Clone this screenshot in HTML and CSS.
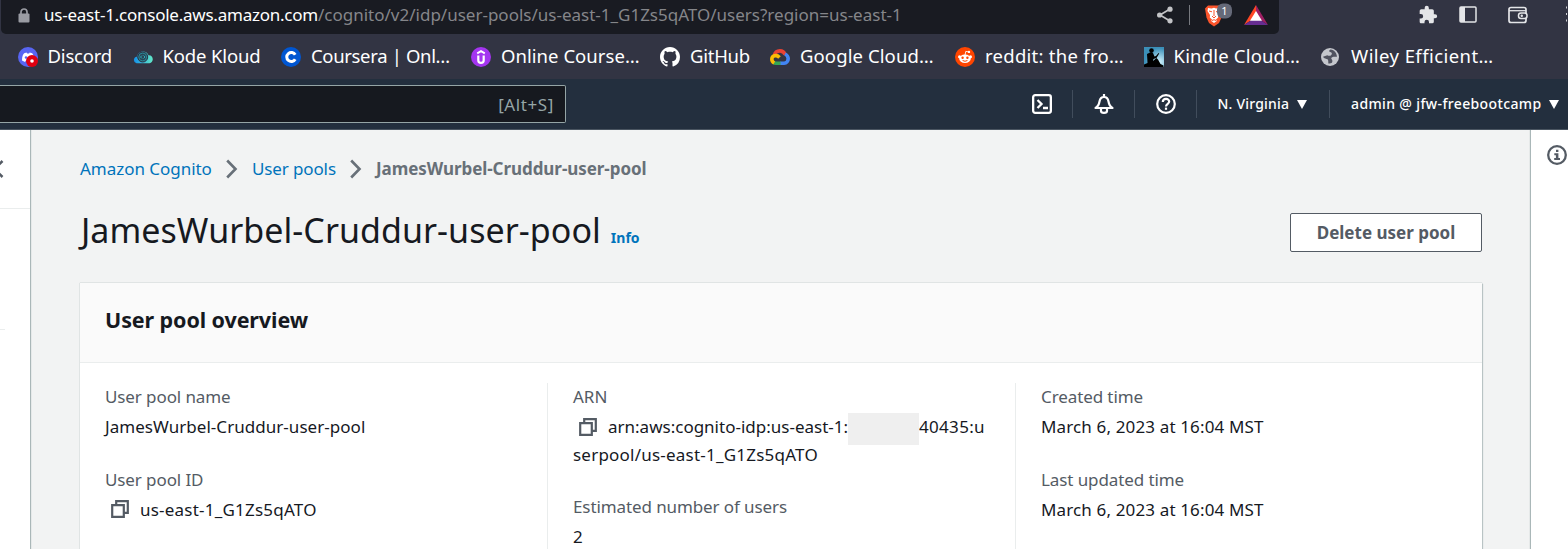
FILE: index.html
```html
<!DOCTYPE html>
<html lang="en">
<head>
<meta charset="utf-8">
<title>JamesWurbel-Cruddur-user-pool</title>
<link rel="stylesheet" href="styles.css">
</head>
<body>
<div class="toolbar">
  <div class="address">
    <svg class="lock" width="12" height="15" viewBox="0 0 12 15"><path d="M3 6V4a3 3 0 0 1 6 0v2" fill="none" stroke="#9a9ca3" stroke-width="1.7"/><rect x=".5" y="5.5" width="11" height="9" rx="1" fill="#9a9ca3"/></svg>
    <span class="host">us-east-1.console.aws.amazon.com</span><span class="path">/cognito/v2/idp/user-pools/us-east-1_G1Zs5qATO/users?region=us-east-1</span>
    <svg class="share" width="18" height="18" viewBox="0 0 18 18"><path d="M14 3 4 9l10 6" fill="none" stroke="#c3c4c7" stroke-width="1.7"/><circle cx="14" cy="3.2" r="2.6" fill="#c3c4c7"/><circle cx="3.6" cy="9" r="2.6" fill="#c3c4c7"/><circle cx="14" cy="14.8" r="2.6" fill="#c3c4c7"/></svg>
    <i class="bar"></i>
    <svg class="brave" width="30" height="26" viewBox="0 0 30 26"><path d="M5 3.500h12l3 3-1.500 9-2.500 5.500-5 3.500L6 21l-2.500-5.500L2 6.500z" fill="#fb542b"/><path d="m5 6 3.500.5 2.500-.8 2 .8L16 6l1.500 3-2.500 4 .2 2.500-2.200 2 .8 1.500-2.800 2-2.800-2 .8-1.500-2.200-2 .2-2.500-2.500-4z" fill="#fff"/><path d="m6 9 3 .8M16 9l-3 .8M11 8v6m-2 0 2 2 2-2m-4 4.500 2-.8 2 .8" stroke="#fb542b" fill="none"/><rect x="14" y="1.500" width="15" height="15" rx="6" fill="#656978"/><text x="21.500" y="13" class="badge">1</text></svg>
    <svg class="bat" width="24" height="20" viewBox="0 0 24 20"><path d="M12 0 0 20l12-8z" fill="#ff4724"/><path d="m12 0 12 20-12-8z" fill="#9e1f63"/><path d="M0 20h24l-12-8z" fill="#662d91"/><path d="m12 6 6 9.800H6z" fill="#fff"/></svg>
  </div>
  <svg class="puzzle" width="20" height="20" viewBox="0 0 24 24"><path fill="#e4e5e8" d="M20.500 11H19V7a2 2 0 0 0-2-2h-4V3.500a2.500 2.500 0 0 0-5 0V5H4a2 2 0 0 0-2 2v3.800h1.500a2.700 2.700 0 0 1 0 5.400H2V20c0 1.100.9 2 2 2h3.800v-1.500a2.700 2.700 0 0 1 5.400 0V22H17a2 2 0 0 0 2-2v-4h1.500a2.500 2.500 0 0 0 0-5z"/></svg>
  <svg class="panel" width="18" height="17" viewBox="0 0 18 17"><rect x="1" y="1" width="16" height="15" rx="1" fill="none" stroke="#e4e5e8" stroke-width="1.500"/><path d="M1 1h5v15H1z" fill="#e4e5e8"/></svg>
  <svg class="wallet" width="20" height="18" viewBox="0 0 20 18"><rect x="1" y="1.500" width="17" height="15" rx="2" fill="none" stroke="#e4e5e8" stroke-width="1.700"/><path d="M1 4.700h17" stroke="#e4e5e8" stroke-width="1.300"/><rect x="10.500" y="7" width="8.500" height="5.500" rx="2.500" fill="#323443" stroke="#e4e5e8" stroke-width="1.500"/><circle cx="13.800" cy="9.700" r="1.200" fill="#e4e5e8"/></svg>
  <svg class="kebab" width="2" height="18" viewBox="0 0 2 18"><path d="M1 1.500h1v2H1zM1 8h1v2H1zM1 14.500h1v2H1z" fill="#d0d1d5"/></svg>
</div>

<div class="bookmarks">
  <a class="bm b1"><svg width="20" height="20" viewBox="0 0 20 20"><circle cx="10" cy="10" r="10" fill="#5865f2"/><path d="M4 13.500C4 9.500 5 7 6.200 6.200L8.500 5.500l.6 1h2l.6-1 2.500.7C15.500 7.500 16 10 16 13.500l-3 1.500-1-1.500H8L7 15z" fill="#fff"/><circle cx="8" cy="10.500" r="1.200" fill="#5865f2"/><circle cx="14" cy="14" r="6" fill="#e00010"/><circle cx="14" cy="14" r="1.800" fill="#fff"/></svg><span>Discord</span></a>
  <a class="bm b2"><svg width="20" height="20" viewBox="0 0 20 20"><defs><linearGradient id="kk"><stop stop-color="#1490e8"/><stop offset="1" stop-color="#62e8c8"/></linearGradient></defs><path d="M3.500 16.200a3.300 3.300 0 0 1 .3-6.500C5.500 3 14 3 15.500 8.300c5.500-.3 5.500 7.500 1 7.900z" fill="url(#kk)"/><circle cx="9.700" cy="10" r="5" fill="#2a4656" stroke="#2b3545"/><circle cx="9.700" cy="10" r="3.900" fill="none" stroke="#2899a8" stroke-width=".8"/><path d="M9 8.500 7.500 10 9 11.500M10.500 8.500 12 10l-1.500 1.500" stroke="#30b8c8" stroke-width=".9" fill="none"/></svg><span>Kode Kloud</span></a>
  <a class="bm b3"><svg width="20" height="20" viewBox="0 0 20 20"><circle cx="10" cy="10" r="10" fill="#0056d2"/><path d="M14.200 12.200a4.500 4.500 0 1 1 0-4.400" fill="none" stroke="#fff" stroke-width="3"/></svg><span>Coursera | Onl…</span></a>
  <a class="bm b4"><svg width="20" height="20" viewBox="0 0 20 20"><circle cx="10" cy="10" r="10" fill="#a435f0"/><path d="M7.300 8.500v4.700a2.700 2.700 0 0 0 5.400 0V8.500" fill="none" stroke="#fff" stroke-width="2.200"/><path d="M6.200 6.300 10 4.200l3.800 2.100" fill="none" stroke="#fff" stroke-width="1.900"/></svg><span>Online Course…</span></a>
  <a class="bm b5"><svg width="20" height="20" viewBox="0 0 16 16"><path fill="#fff" d="M8 0C3.580 0 0 3.580 0 8c0 3.540 2.290 6.530 5.470 7.590.4.070.55-.17.55-.38 0-.19-.01-.82-.01-1.490-2.010.37-2.530-.49-2.690-.94-.09-.23-.48-.94-.82-1.130-.28-.15-.68-.52-.01-.53.63-.01 1.080.58 1.230.82.72 1.210 1.870.87 2.330.66.07-.52.28-.87.51-1.070-1.780-.2-3.640-.89-3.640-3.950 0-.87.31-1.590.82-2.150-.08-.2-.36-1.020.08-2.120 0 0 .67-.21 2.200.82.640-.18 1.320-.27 2-.27s1.360.09 2 .27c1.530-1.040 2.200-.82 2.200-.82.44 1.100.16 1.920.08 2.120.51.56.82 1.270.82 2.150 0 3.070-1.870 3.750-3.650 3.950.29.25.54.73.54 1.480 0 1.070-.01 1.930-.01 2.200 0 .21.15.46.55.38A8.010 8.010 0 0 0 16 8c0-4.420-3.580-8-8-8z"/></svg><span>GitHub</span></a>
  <a class="bm b6"><svg width="20" height="20" viewBox="0 0 20 20" fill="none" stroke-width="3.600"><path d="M4.300 8.500C5 5.200 7.200 3.900 10 3.900c2.500 0 4.200 1.300 5.200 3.700" stroke="#ea4335"/><path d="M15 7c2 1 3.200 2.500 3.200 4.800s-1.800 4.400-4 4.400H10" stroke="#4285f4"/><path d="M10.500 16.200H6c-1 0-1.800-.2-2.500-.7" stroke="#34a853"/><path d="M4.200 16C1 14 1 9.800 4.500 8.800c2.300-.6 3.700.3 5 1.700" stroke="#fbbc04"/></svg><span>Google Cloud…</span></a>
  <a class="bm b7"><svg width="20" height="20" viewBox="0 0 20 20"><circle cx="10" cy="10" r="10" fill="#ff4500"/><ellipse cx="10" cy="11.700" rx="5.800" ry="4.200" fill="#fff"/><circle cx="4.500" cy="9.700" r="1.500" fill="#fff"/><circle cx="15.500" cy="9.700" r="1.500" fill="#fff"/><circle cx="14" cy="4.900" r="1.200" fill="#fff"/><path d="m10 8 .8-3.600 3 .6" fill="none" stroke="#fff" stroke-width=".9"/><circle cx="7.600" cy="10.800" r="1.200" fill="#ff4500"/><circle cx="12.400" cy="10.800" r="1.200" fill="#ff4500"/><path d="M7.600 13.500q2.400 1.500 4.800 0" fill="none" stroke="#ff4500"/></svg><span>reddit: the fro…</span></a>
  <a class="bm b8"><svg width="20" height="20" viewBox="0 0 20 20"><defs><radialGradient id="kd" cx=".75" cy=".75" r=".7"><stop stop-color="#d5f5ff"/><stop offset="1" stop-color="#3b8fb8"/></radialGradient></defs><path d="M0 0h20v20H0z" fill="url(#kd)"/><circle cx="7.500" cy="3.600" r="2.300"/><path d="m3 7 3.500-1.700 2.500.7 1.500 3.500 1.500-.5 2.500-3 .7.500-2.700 4.500-3 1-.5 2 3.500-3 1.500 1.500 2.500 4.500 3 1.500v1.500H0v-2.500l3.500-1.500z"/></svg><span>Kindle Cloud…</span></a>
  <a class="bm b9"><svg width="20" height="20" viewBox="0 0 20 20"><circle cx="9" cy="10" r="9" fill="#c4c6cc"/><path d="M9.500 2.500c-2 1-1.500 2.500.3 2.700 1.500.3 1.300 2 .2 3-.8 1-2.700.5-3.700 0L2 9.800c1 2 3.500 2 4.500 2.400 1 .8.800 2.300.8 4.300 4 0 4.200-1.300 4-3-.5-1.500-1.300-1.700-1-2.500.8-1.500 3.200-1.300 5.700-1.200C15.800 6 13.500 3 9.500 2.500z" fill="#50525f"/></svg><span>Wiley Efficient…</span></a>
</div>

<div class="nav">
  <div class="search"><span>[Alt+S]</span></div>
  <div class="cell ic"><svg width="20" height="20" viewBox="0 0 20 20" fill="none" stroke="#fff" stroke-width="2.300"><rect x="1.150" y="1.150" width="17.700" height="17.700" rx="2"/><path d="m5.500 6 4 4-4 4M11 14h5"/></svg></div>
  <div class="cell ic"><svg width="20" height="20" viewBox="0 0 20 20" fill="none" stroke="#fff" stroke-width="2.200" stroke-linejoin="round"><path d="M10 0v3M1.500 14c2.800-1.500 3.500-3.500 4-6.500C6 4.500 7.500 3 10 3s4 1.500 4.500 4.500c.5 3 1.200 5 4 6.500zM7 14.500V17c0 2.500 6 2.500 6 0v-2.500"/></svg></div>
  <div class="cell ic"><svg width="20" height="20" viewBox="0 0 20 20" fill="none" stroke="#fff" stroke-width="2.200"><circle cx="10" cy="10" r="8.800"/><path d="M6.800 8C6.800 4 13.200 4 13.200 7.500c0 2.300-3.200 2.300-3.200 5"/><path d="M10 13.600v2.200"/></svg></div>
  <div class="cell region"><span>N. Virginia</span><i class="caret"></i></div>
  <div class="cell account"><span>admin @ jfw-freebootcamp</span><i class="caret"></i></div>
</div>

<div class="page">
  <aside class="left"><div class="lefttop"><svg width="4" height="18" viewBox="0 0 4 18"><path d="M3 1-5 9l8 8" transform="translate(-.5)" fill="none" stroke="#545b64" stroke-width="2.500"/></svg></div><div class="leftsep"></div></aside>
  <main class="main">
    <nav class="crumbs">
      <a>Amazon Cognito</a>
      <svg width="12" height="20" viewBox="0 0 12 20"><path d="m1.200 1.500 8.300 8.500-8.300 8.500" fill="none" stroke="#687078" stroke-width="2.600"/></svg>
      <a>User pools</a>
      <svg width="12" height="20" viewBox="0 0 12 20"><path d="m1.200 1.500 8.300 8.500-8.300 8.500" fill="none" stroke="#687078" stroke-width="2.600"/></svg>
      <b>JamesWurbel-Cruddur-user-pool</b>
    </nav>
    <header class="head">
      <h1>JamesWurbel-Cruddur-user-pool</h1><a class="info">Info</a>
      <button class="delete">Delete user pool</button>
    </header>
    <section class="card">
      <h2>User pool overview</h2>
      <div class="cols">
        <div class="col">
          <div class="field"><div class="label">User pool name</div><div class="name">JamesWurbel-Cruddur-user-pool</div></div>
          <div class="field"><div class="label">User pool ID</div><div class="copyrow"><svg class="copy" width="18" height="18" viewBox="0 0 18 18" fill="none" stroke="#545b64" stroke-width="2.200"><path d="M5.200 5V1.200h11.600v11.600H13"/><path d="M1.200 5.200h11.600v11.600H1.200z"/></svg><span class="poolid">us-east-1_G1Zs5qATO</span></div></div>
        </div>
        <div class="col">
          <div class="field"><div class="label arnlabel">ARN</div><div class="copyrow"><svg class="copy" width="18" height="18" viewBox="0 0 18 18" fill="none" stroke="#545b64" stroke-width="2.200"><path d="M5.200 5V1.200h11.600v11.600H13"/><path d="M1.200 5.200h11.600v11.600H1.200z"/></svg><span>arn:aws:cognito-idp:us-east-1:</span><i class="mask"></i><span class="digits">40435:u</span></div><div class="arnrest">serpool/us-east-1_G1Zs5qATO</div></div>
          <div class="field"><div class="label">Estimated number of users</div><div>2</div></div>
        </div>
        <div class="col">
          <div class="field"><div class="label">Created time</div><div class="date">March 6, 2023 at 16:04 MST</div></div>
          <div class="field"><div class="label">Last updated time</div><div class="date">March 6, 2023 at 16:04 MST</div></div>
        </div>
      </div>
    </section>
  </main>
  <aside class="right"><svg width="20" height="20" viewBox="0 0 20 20"><circle cx="10" cy="10" r="8.800" fill="none" stroke="#545b64" stroke-width="2.300"/><path d="M9 4.700h2.400v2.400H9zM7.300 8.300h4.100v4.700h1.600v2H7.200v-2h1.700v-2.700H7.300z" fill="#545b64"/></svg></aside>
</div>
</body>
</html>
```
FILE: styles.css
```css
* { box-sizing: border-box; }
body { margin: 0; width: 1568px; height: 549px; overflow: hidden; background: #f2f3f3; font-family: "Noto Sans", "Open Sans", sans-serif; font-size: 17px; color: #16191f; }
svg { display: block; flex: none; }
span, a, b, h1 { white-space: nowrap; }

/* Browser toolbar */
.toolbar { display: flex; height: 34px; background: #323443; }
.address { display: flex; align-items: center; width: 1278px; height: 34px; margin-left: 1px; padding: 0 0 4px 17px; background: #191b22; border-radius: 0 0 5px 5px; line-height: 30px; }
.host { width: 274px; margin-left: 14px; color: #fff; letter-spacing: -0.232px; }
.path { width: 584px; color: #85868a; }
.share { margin-left: 254px; }
.bar { width: 1px; height: 20px; margin-left: 15px; background: #77797f; }
.brave { margin-left: 13px; }
.badge { font: 11px "Noto Sans", sans-serif; fill: #fff; text-anchor: middle; }
.bat { margin-left: 11px; }
.puzzle { margin: 5px 0 0 139px; }
.panel { margin: 6px 0 0 21px; }
.wallet { margin: 6px 0 0 31px; }
.kebab { margin: 5px 0 0 37px; }

/* Bookmarks */
.bookmarks { display: flex; align-items: center; height: 45px; padding-left: 18px; background: #323443; color: #fff; font-size: 18.5px; }
.bm { display: flex; align-items: center; gap: 10px; flex: none; line-height: 28px; }
.bm span { height: 30px; }
.b1 { width: 115px; letter-spacing: -0.2px; gap: 9.5px; }
.b2 { width: 148px; letter-spacing: -0.15px; gap: 9.5px; }
.b3 { width: 190px; letter-spacing: -0.34px; }
.b4 { width: 189px; letter-spacing: 0.04px; }
.b5 { width: 110px; letter-spacing: -0.26px; }
.b6 { width: 185px; letter-spacing: 0.1px; }
.b7 { width: 189px; letter-spacing: 0.27px; }
.b8 { width: 177px; letter-spacing: 0.18px; gap: 9.5px; }
.b9 { width: 180px; letter-spacing: 0.43px; }

/* AWS navigation */
.nav { display: flex; align-items: center; height: 51px; background: #232f3e; border-bottom: 1px solid #4a5561; color: #fff; font-size: 14px; font-weight: 500; }
.search { width: 566px; height: 38px; margin-right: 445px; padding-right: 11px; background: #16191f; border: 1px solid #95a5a6; border-left: 0; border-radius: 0 2px 2px 0; color: #95a5a6; font-size: 17px; font-weight: 400; line-height: 37px; letter-spacing: 0.6px; text-align: right; }
.cell { display: flex; align-items: center; height: 28px; border-right: 1px solid #414d5c; flex: none; }
.cell span { line-height: 20px; }
.ic { width: 62px; padding-left: 21px; }
.region { width: 133px; padding-left: 20.5px; letter-spacing: 0.2px; }
.account { padding-left: 21px; border: 0; letter-spacing: 0.37px; }
.caret { border: 5px solid transparent; border-top: 9px solid #fff; border-bottom: 0; margin-left: 7.500px; }

/* Page */
.page { display: flex; height: 419px; overflow: hidden; }
.left { width: 30px; background: #fff; box-shadow: 1px 0 1px #aab7b8; flex: none; }
.lefttop { height: 79px; padding-top: 30px; border-bottom: 1px solid #eaeded; }
.leftsep { width: 5px; height: 121px; border-bottom: 1px solid #eaeded; }
.right { width: 37px; padding: 15px 0 0 16px; background: #fff; box-shadow: -1px 0 1px #aab7b8; flex: none; }
.main { width: 1501px; padding: 0 48px 0 50px; }
.crumbs { display: flex; align-items: center; height: 28px; margin-top: 25px; color: #0073bb; letter-spacing: -0.03px; }
.crumbs a, .crumbs b { height: 24px; }
.crumbs svg { margin: 0 13.500px 0 14.500px; }
.crumbs a + svg + a { letter-spacing: -0.11px; }
.crumbs b { color: #687078; letter-spacing: -0.06px; }
.head { display: flex; align-items: baseline; height: 72px; margin-top: 28px; }
h1 { margin: 0 0 0 1px; font-size: 34px; line-height: 38px; font-weight: 400; letter-spacing: 0.05px; }
.info { margin-left: 10px; color: #0073bb; font-size: 14px; font-weight: 700; }
.delete { align-self: flex-start; width: 192px; height: 39px; margin: 2px 1px 0 auto; padding: 0; border: 1px solid #545b64; border-radius: 2px; background: #fff; color: #545b64; font: 700 17px/34px "Noto Sans", sans-serif; }
.card { width: 1402px; height: 300px; background: #fff; box-shadow: 0 0 1px #8a9a9c, 1px 1px 1px #c3cccd; }
h2 { height: 80px; margin: 0; padding-left: 25px; background: #fafafa; border-bottom: 1px solid #eaeded; font-size: 21.500px; line-height: 73px; letter-spacing: -0.1px; }
.cols { display: grid; grid-template-columns: 467px 468px 467px; padding-top: 20px; }
.col { height: 220px; padding-left: 25px; line-height: 27.500px; border-left: 1px solid #eaeded; }
.col:first-child { border: 0; }
.field { margin-bottom: 25px; }
.label { margin-bottom: 2.500px; color: #545b64; letter-spacing: -0.1px; }
.arnlabel { letter-spacing: 0; }
.name { letter-spacing: 0.04px; }
.poolid, .arnrest { letter-spacing: 0.22px; }
.digits { letter-spacing: 0.3px; }
.date { letter-spacing: 0.14px; }
.copyrow { display: flex; align-items: center; height: 27.500px; }
.copy { margin: 0 11px 0 6px; }
.mask { position: relative; top: 2px; width: 71px; height: 32px; background: #efefef; }
```
